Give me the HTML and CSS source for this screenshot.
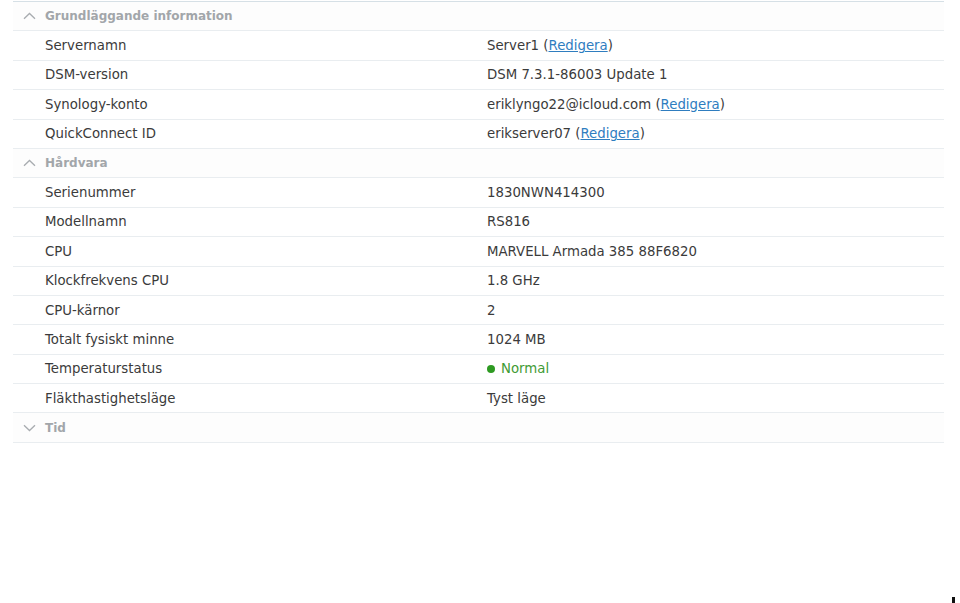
FILE: index.html
```html
<!DOCTYPE html>
<html lang="sv">
<head>
  <meta charset="UTF-8">
  <title>Info Center</title>
  <link rel="stylesheet" href="styles.css">
</head>
<body>
  <main class="info-panel">
    <div class="group-head">
      <svg class="chev" viewBox="0 0 13 8"><path d="M1 6.8 6.5 1.5 12 6.8"/></svg>
      <span>Grundläggande information</span>
    </div>
    <div class="row"><div class="label">Servernamn</div><div class="value">Server1 (<a href="#">Redigera</a>)</div></div>
    <div class="row"><div class="label">DSM-version</div><div class="value">DSM 7.3.1-86003 Update 1</div></div>
    <div class="row"><div class="label">Synology-konto</div><div class="value">eriklyngo22@icloud.com (<a href="#">Redigera</a>)</div></div>
    <div class="row"><div class="label">QuickConnect ID</div><div class="value">erikserver07 (<a href="#">Redigera</a>)</div></div>

    <div class="group-head">
      <svg class="chev" viewBox="0 0 13 8"><path d="M1 6.8 6.5 1.5 12 6.8"/></svg>
      <span>Hårdvara</span>
    </div>
    <div class="row"><div class="label">Serienummer</div><div class="value">1830NWN414300</div></div>
    <div class="row"><div class="label">Modellnamn</div><div class="value">RS816</div></div>
    <div class="row"><div class="label">CPU</div><div class="value">MARVELL Armada 385 88F6820</div></div>
    <div class="row"><div class="label">Klockfrekvens CPU</div><div class="value">1.8 GHz</div></div>
    <div class="row"><div class="label">CPU-kärnor</div><div class="value">2</div></div>
    <div class="row"><div class="label">Totalt fysiskt minne</div><div class="value">1024 MB</div></div>
    <div class="row"><div class="label">Temperaturstatus</div><div class="value status-ok"><i class="dot"></i>Normal</div></div>
    <div class="row"><div class="label">Fläkthastighetsläge</div><div class="value">Tyst läge</div></div>

    <div class="group-head">
      <svg class="chev" viewBox="0 0 13 8"><path d="M1 1.2 6.5 6.5 12 1.2"/></svg>
      <span>Tid</span>
    </div>
  </main>
  <div class="cursor"></div>
</body>
</html>
```

FILE: styles.css
```css
* { box-sizing: border-box; }
body { margin: 0; background: #fff; color: #3b3b3b; font-family: "DejaVu Sans", Verdana, sans-serif; font-size: 13.3px; }
.info-panel { margin: 1px 16px 0 13px; border-top: 1px solid #d6e0e6; }
.group-head, .row { height: 29.4px; border-bottom: 1px solid #e9edf0; display: flex; align-items: center; }
.group-head { background: #fdfdfd; color: #a2a6aa; font-weight: bold; font-size: 12px; padding-left: 10px; }
.chev { width: 13px; height: 8px; margin-right: 9px; fill: none; stroke: #a8acb0; stroke-width: 1.3; }
.row .label { width: 474px; padding-left: 32px; }
.row .value { flex: 1; }
.value a { color: #2f7dbf; text-decoration: underline; }
.status-ok { color: #3f9b34; display: flex; align-items: center; }
.dot { display: inline-block; width: 8px; height: 8px; border-radius: 50%; background: #2e9a22; margin-right: 6px; }
.cursor { position: absolute; left: 952px; top: 597px; width: 3px; height: 6px; background: #111; }
```
